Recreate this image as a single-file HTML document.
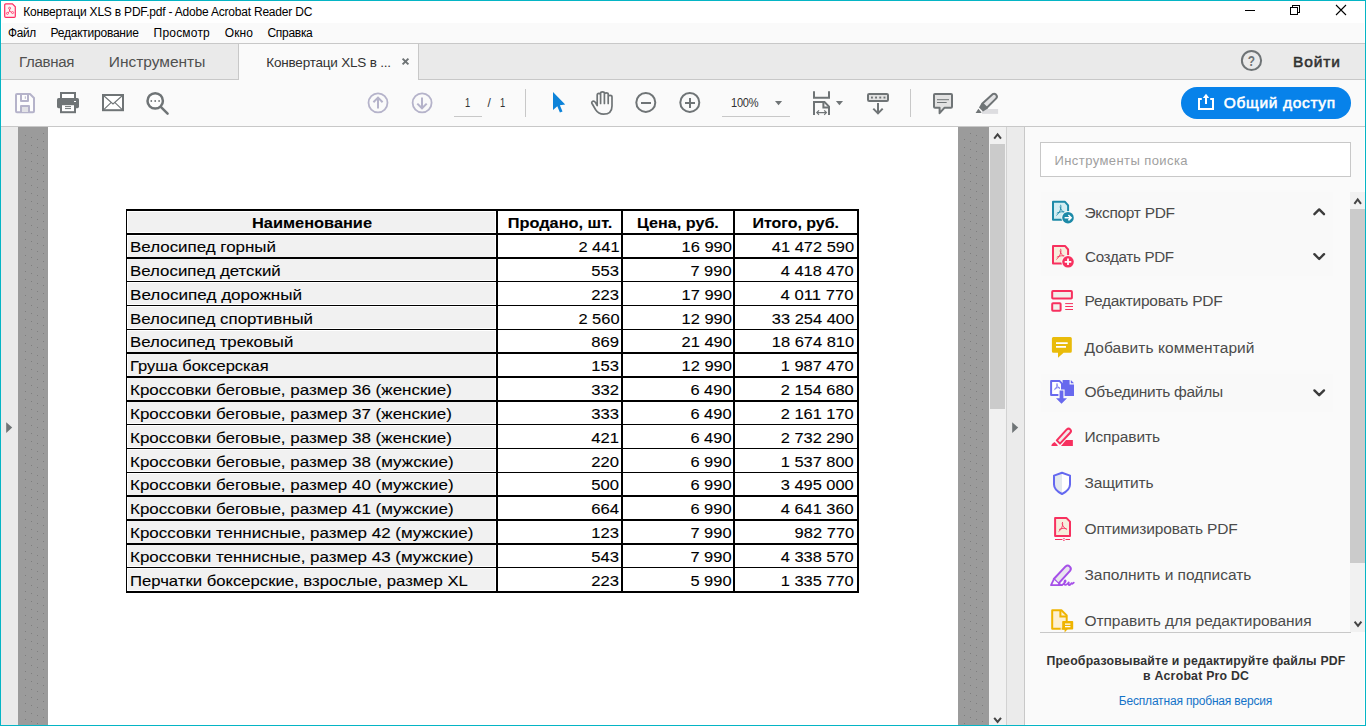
<!DOCTYPE html>
<html lang="ru"><head><meta charset="utf-8"><title>Конвертаци XLS в PDF.pdf - Adobe Acrobat Reader DC</title>
<style>
html,body{margin:0;padding:0}
body{width:1366px;height:726px;overflow:hidden;position:relative;background:#fff;font-family:"Liberation Sans",sans-serif}
div,span,svg{position:absolute;box-sizing:border-box}
.t{white-space:nowrap;line-height:normal}
.c{white-space:nowrap;line-height:normal;font-size:15px;color:#000;-webkit-text-stroke:0.1px #000}
.ln{background:#000}
.fill{background:#f1f1f1}
svg{overflow:visible}
</style></head><body>
<!-- window chrome -->
<div style="left:0;top:0;width:1366px;height:726px;border:1px solid #05b5c5;z-index:50"></div>
<div style="left:2px;top:23px;width:1362px;height:20px;background:#fafafa"></div>
<div style="left:1px;top:43px;width:1364px;height:37px;background:#eaeaea;border-top:1px solid #c8c8c8;border-bottom:1px solid #c8c8c8"></div>
<div style="left:238px;top:44px;width:181px;height:36px;background:#fafafa;border-right:1px solid #c8c8c8;border-left:1px solid #c8c8c8"></div>
<div style="left:1px;top:80px;width:1364px;height:47px;background:#fafafa;border-bottom:1px solid #c8c8c8"></div>
<!-- document area -->
<div style="left:1px;top:127px;width:17px;height:598px;background:#ebebeb"></div>
<div style="left:18px;top:127px;width:30px;height:598px;background:#9b9b9b"></div>
<div style="left:958px;top:127px;width:31px;height:598px;background:#9b9b9b"></div>
<div style="left:989px;top:127px;width:17px;height:598px;background:#f1f1f1"></div>
<div style="left:990px;top:144px;width:15px;height:265px;background:#cbcbcb"></div>
<div style="left:1006px;top:127px;width:1px;height:598px;background:#d2d2d2"></div>
<div style="left:1007px;top:127px;width:17px;height:598px;background:#ebebeb"></div>
<div style="left:1024px;top:127px;width:1px;height:598px;background:#c8c8c8"></div>
<div style="left:1025px;top:127px;width:339px;height:597px;background:#fafafa"></div>
<svg width="1366" height="726" viewBox="0 0 1366 726" style="left:0;top:0"><defs><pattern id="dz" width="24" height="8" patternUnits="userSpaceOnUse" patternTransform="translate(25 7)"><g fill="#7e7e7e"><rect x="0" y="0" width="1" height="1"/><rect x="6" y="2" width="1" height="1"/><rect x="12" y="4" width="1" height="1"/><rect x="18" y="6" width="1" height="1"/></g></pattern><pattern id="dy" width="24" height="8" patternUnits="userSpaceOnUse" patternTransform="translate(964 3)"><g fill="#7e7e7e"><rect x="0" y="0" width="1" height="1"/><rect x="6" y="2" width="1" height="1"/><rect x="12" y="4" width="1" height="1"/><rect x="18" y="6" width="1" height="1"/></g></pattern></defs><rect x="24" y="133" width="21" height="592" fill="url(#dz)"/><rect x="963" y="133" width="21" height="592" fill="url(#dy)"/></svg>
<!-- right panel -->
<div style="left:1040px;top:142px;width:311px;height:35px;background:#fff;border:1px solid #c8c8c8"></div>
<div style="left:1040px;top:632px;width:311px;height:1px;background:#c8c8c8"></div>
<div style="left:1350px;top:192px;width:15px;height:440px;background:#f1f1f1"></div>
<div style="left:1350px;top:209px;width:15px;height:354px;background:#cbcbcb"></div>
<!-- hover rows -->
<div style="left:1041px;top:192px;width:292px;height:84px;background:#f9f9f9"></div>
<div style="left:1041px;top:374px;width:292px;height:38px;background:#f9f9f9"></div>
<!-- share button -->
<div style="left:1181px;top:87px;width:170px;height:32px;border-radius:16px;background:#0782ea"></div>
<div class="fill" style="left:127px;top:211px;width:370px;height:380px"></div>
<div style="left:127px;top:208.6px;width:370px;height:3.2px;background:#fff"></div>
<div style="left:127px;top:232.4px;width:370px;height:3.2px;background:#fff"></div>
<div style="left:127px;top:256.5px;width:370px;height:2.7px;background:#fff"></div>
<div style="left:127px;top:280.3px;width:370px;height:2.7px;background:#fff"></div>
<div style="left:127px;top:304.2px;width:370px;height:2.7px;background:#fff"></div>
<div style="left:127px;top:328.0px;width:370px;height:2.7px;background:#fff"></div>
<div style="left:127px;top:351.8px;width:370px;height:2.7px;background:#fff"></div>
<div style="left:127px;top:375.7px;width:370px;height:2.7px;background:#fff"></div>
<div style="left:127px;top:399.5px;width:370px;height:2.7px;background:#fff"></div>
<div style="left:127px;top:423.3px;width:370px;height:2.7px;background:#fff"></div>
<div style="left:127px;top:447.2px;width:370px;height:2.7px;background:#fff"></div>
<div style="left:127px;top:471.0px;width:370px;height:2.7px;background:#fff"></div>
<div style="left:127px;top:494.8px;width:370px;height:2.7px;background:#fff"></div>
<div style="left:127px;top:518.7px;width:370px;height:2.7px;background:#fff"></div>
<div style="left:127px;top:542.5px;width:370px;height:2.7px;background:#fff"></div>
<div style="left:127px;top:566.3px;width:370px;height:2.7px;background:#fff"></div>
<div style="left:127px;top:589.9px;width:370px;height:3.2px;background:#fff"></div>
<div style="left:127px;top:211px;width:1.2px;height:380px;background:#fff"></div>
<div style="left:495.4px;top:211px;width:1px;height:380px;background:#fff"></div>
<div class="ln" style="left:126px;top:209.2px;width:733px;height:2px"></div>
<div class="ln" style="left:126px;top:233.0px;width:733px;height:2px"></div>
<div class="ln" style="left:126px;top:257.1px;width:733px;height:1.5px"></div>
<div class="ln" style="left:126px;top:280.9px;width:733px;height:1.5px"></div>
<div class="ln" style="left:126px;top:304.8px;width:733px;height:1.5px"></div>
<div class="ln" style="left:126px;top:328.6px;width:733px;height:1.5px"></div>
<div class="ln" style="left:126px;top:352.4px;width:733px;height:1.5px"></div>
<div class="ln" style="left:126px;top:376.3px;width:733px;height:1.5px"></div>
<div class="ln" style="left:126px;top:400.1px;width:733px;height:1.5px"></div>
<div class="ln" style="left:126px;top:423.9px;width:733px;height:1.5px"></div>
<div class="ln" style="left:126px;top:447.8px;width:733px;height:1.5px"></div>
<div class="ln" style="left:126px;top:471.6px;width:733px;height:1.5px"></div>
<div class="ln" style="left:126px;top:495.4px;width:733px;height:1.5px"></div>
<div class="ln" style="left:126px;top:519.3px;width:733px;height:1.5px"></div>
<div class="ln" style="left:126px;top:543.1px;width:733px;height:1.5px"></div>
<div class="ln" style="left:126px;top:566.9px;width:733px;height:1.5px"></div>
<div class="ln" style="left:126px;top:590.5px;width:733px;height:2px"></div>
<div class="ln" style="left:125.8px;top:209px;width:1.5px;height:383.3px"></div>
<div class="ln" style="left:496.0px;top:209px;width:2px;height:383.3px"></div>
<div class="ln" style="left:621.0px;top:209px;width:2px;height:383.3px"></div>
<div class="ln" style="left:733.2px;top:209px;width:2px;height:383.3px"></div>
<div class="ln" style="left:856.7px;top:209px;width:2px;height:383.3px"></div>
<span class="c" style="left:256.7px;transform-origin:50% 0;top:214.0px;transform:scaleX(1.0904);font-weight:700;">Наименование</span>
<span class="c" style="left:511.5px;transform-origin:50% 0;top:214.0px;transform:scaleX(1.0890);font-weight:700;">Продано, шт.</span>
<span class="c" style="left:640.1px;transform-origin:50% 0;top:214.0px;transform:scaleX(1.0757);font-weight:700;">Цена, руб.</span>
<span class="c" style="left:755.3px;transform-origin:50% 0;top:214.0px;transform:scaleX(1.0624);font-weight:700;">Итого, руб.</span>
<span class="c" style="left:130.0px;transform-origin:0 0;top:238.0px;transform:scaleX(1.1288);">Велосипед горный</span>
<span class="c" style="left:581.5px;transform-origin:100% 0;top:238.0px;transform:scaleX(1.0953);">2 441</span>
<span class="c" style="left:685.5px;transform-origin:100% 0;top:238.0px;transform:scaleX(1.0977);">16 990</span>
<span class="c" style="left:778.9px;transform-origin:100% 0;top:238.0px;transform:scaleX(1.0955);">41 472 590</span>
<span class="c" style="left:130.0px;transform-origin:0 0;top:262.0px;transform:scaleX(1.1236);">Велосипед детский</span>
<span class="c" style="left:594.0px;transform-origin:100% 0;top:262.0px;transform:scaleX(1.1086);">553</span>
<span class="c" style="left:693.9px;transform-origin:100% 0;top:262.0px;transform:scaleX(1.0953);">7 990</span>
<span class="c" style="left:787.3px;transform-origin:100% 0;top:262.0px;transform:scaleX(1.0939);">4 418 470</span>
<span class="c" style="left:130.0px;transform-origin:0 0;top:286.0px;transform:scaleX(1.1386);">Велосипед дорожный</span>
<span class="c" style="left:594.0px;transform-origin:100% 0;top:286.0px;transform:scaleX(1.1086);">223</span>
<span class="c" style="left:685.5px;transform-origin:100% 0;top:286.0px;transform:scaleX(1.0977);">17 990</span>
<span class="c" style="left:788.4px;transform-origin:100% 0;top:286.0px;transform:scaleX(1.1124);">4 011 770</span>
<span class="c" style="left:130.0px;transform-origin:0 0;top:310.0px;transform:scaleX(1.1250);">Велосипед спортивный</span>
<span class="c" style="left:581.5px;transform-origin:100% 0;top:310.0px;transform:scaleX(1.0953);">2 560</span>
<span class="c" style="left:685.5px;transform-origin:100% 0;top:310.0px;transform:scaleX(1.0977);">12 990</span>
<span class="c" style="left:778.9px;transform-origin:100% 0;top:310.0px;transform:scaleX(1.0955);">33 254 400</span>
<span class="c" style="left:130.0px;transform-origin:0 0;top:333.0px;transform:scaleX(1.1202);">Велосипед трековый</span>
<span class="c" style="left:594.0px;transform-origin:100% 0;top:333.0px;transform:scaleX(1.1086);">869</span>
<span class="c" style="left:685.5px;transform-origin:100% 0;top:333.0px;transform:scaleX(1.0977);">21 490</span>
<span class="c" style="left:778.9px;transform-origin:100% 0;top:333.0px;transform:scaleX(1.0955);">18 674 810</span>
<span class="c" style="left:130.0px;transform-origin:0 0;top:357.0px;transform:scaleX(1.0991);">Груша боксерская</span>
<span class="c" style="left:594.0px;transform-origin:100% 0;top:357.0px;transform:scaleX(1.1086);">153</span>
<span class="c" style="left:685.5px;transform-origin:100% 0;top:357.0px;transform:scaleX(1.0977);">12 990</span>
<span class="c" style="left:787.3px;transform-origin:100% 0;top:357.0px;transform:scaleX(1.0939);">1 987 470</span>
<span class="c" style="left:130.0px;transform-origin:0 0;top:381.0px;transform:scaleX(1.1314);">Кроссовки беговые, размер 36 (женские)</span>
<span class="c" style="left:594.0px;transform-origin:100% 0;top:381.0px;transform:scaleX(1.1086);">332</span>
<span class="c" style="left:693.9px;transform-origin:100% 0;top:381.0px;transform:scaleX(1.0953);">6 490</span>
<span class="c" style="left:787.3px;transform-origin:100% 0;top:381.0px;transform:scaleX(1.0939);">2 154 680</span>
<span class="c" style="left:130.0px;transform-origin:0 0;top:405.0px;transform:scaleX(1.1314);">Кроссовки беговые, размер 37 (женские)</span>
<span class="c" style="left:594.0px;transform-origin:100% 0;top:405.0px;transform:scaleX(1.1086);">333</span>
<span class="c" style="left:693.9px;transform-origin:100% 0;top:405.0px;transform:scaleX(1.0953);">6 490</span>
<span class="c" style="left:787.3px;transform-origin:100% 0;top:405.0px;transform:scaleX(1.0939);">2 161 170</span>
<span class="c" style="left:130.0px;transform-origin:0 0;top:429.0px;transform:scaleX(1.1314);">Кроссовки беговые, размер 38 (женские)</span>
<span class="c" style="left:594.0px;transform-origin:100% 0;top:429.0px;transform:scaleX(1.1086);">421</span>
<span class="c" style="left:693.9px;transform-origin:100% 0;top:429.0px;transform:scaleX(1.0953);">6 490</span>
<span class="c" style="left:787.3px;transform-origin:100% 0;top:429.0px;transform:scaleX(1.0939);">2 732 290</span>
<span class="c" style="left:130.0px;transform-origin:0 0;top:453.0px;transform:scaleX(1.1313);">Кроссовки беговые, размер 38 (мужские)</span>
<span class="c" style="left:594.0px;transform-origin:100% 0;top:453.0px;transform:scaleX(1.1086);">220</span>
<span class="c" style="left:693.9px;transform-origin:100% 0;top:453.0px;transform:scaleX(1.0953);">6 990</span>
<span class="c" style="left:787.3px;transform-origin:100% 0;top:453.0px;transform:scaleX(1.0939);">1 537 800</span>
<span class="c" style="left:130.0px;transform-origin:0 0;top:476.0px;transform:scaleX(1.1313);">Кроссовки беговые, размер 40 (мужские)</span>
<span class="c" style="left:594.0px;transform-origin:100% 0;top:476.0px;transform:scaleX(1.1086);">500</span>
<span class="c" style="left:693.9px;transform-origin:100% 0;top:476.0px;transform:scaleX(1.0953);">6 990</span>
<span class="c" style="left:787.3px;transform-origin:100% 0;top:476.0px;transform:scaleX(1.0939);">3 495 000</span>
<span class="c" style="left:130.0px;transform-origin:0 0;top:500.0px;transform:scaleX(1.1313);">Кроссовки беговые, размер 41 (мужские)</span>
<span class="c" style="left:594.0px;transform-origin:100% 0;top:500.0px;transform:scaleX(1.1086);">664</span>
<span class="c" style="left:693.9px;transform-origin:100% 0;top:500.0px;transform:scaleX(1.0953);">6 990</span>
<span class="c" style="left:787.3px;transform-origin:100% 0;top:500.0px;transform:scaleX(1.0939);">4 641 360</span>
<span class="c" style="left:130.0px;transform-origin:0 0;top:524.0px;transform:scaleX(1.1307);">Кроссовки теннисные, размер 42 (мужские)</span>
<span class="c" style="left:594.0px;transform-origin:100% 0;top:524.0px;transform:scaleX(1.1086);">123</span>
<span class="c" style="left:693.9px;transform-origin:100% 0;top:524.0px;transform:scaleX(1.0953);">7 990</span>
<span class="c" style="left:799.8px;transform-origin:100% 0;top:524.0px;transform:scaleX(1.0994);">982 770</span>
<span class="c" style="left:130.0px;transform-origin:0 0;top:548.0px;transform:scaleX(1.1307);">Кроссовки теннисные, размер 43 (мужские)</span>
<span class="c" style="left:594.0px;transform-origin:100% 0;top:548.0px;transform:scaleX(1.1086);">543</span>
<span class="c" style="left:693.9px;transform-origin:100% 0;top:548.0px;transform:scaleX(1.0953);">7 990</span>
<span class="c" style="left:787.3px;transform-origin:100% 0;top:548.0px;transform:scaleX(1.0939);">4 338 570</span>
<span class="c" style="left:130.0px;transform-origin:0 0;top:572.0px;transform:scaleX(1.1118);">Перчатки боксерские, взрослые, размер XL</span>
<span class="c" style="left:594.0px;transform-origin:100% 0;top:572.0px;transform:scaleX(1.1086);">223</span>
<span class="c" style="left:693.9px;transform-origin:100% 0;top:572.0px;transform:scaleX(1.0953);">5 990</span>
<span class="c" style="left:787.3px;transform-origin:100% 0;top:572.0px;transform:scaleX(1.0939);">1 335 770</span>
<span class="t" style="left:23.3px;top:5.0px;font-size:12px;color:#000;letter-spacing:-0.205px;">Конвертаци XLS в PDF.pdf - Adobe Acrobat Reader DC</span>
<span class="t" style="left:7.5px;top:26.0px;font-size:12px;color:#000;letter-spacing:-0.300px;transform:scaleX(0.9820);transform-origin:0 0;">Файл</span>
<span class="t" style="left:50.5px;top:26.0px;font-size:12px;color:#000;letter-spacing:-0.232px;">Редактирование</span>
<span class="t" style="left:153.6px;top:26.0px;font-size:12px;color:#000;letter-spacing:0.198px;">Просмотр</span>
<span class="t" style="left:224.7px;top:26.0px;font-size:12px;color:#000;letter-spacing:0.136px;">Окно</span>
<span class="t" style="left:267.5px;top:26.0px;font-size:12px;color:#000;letter-spacing:-0.296px;">Справка</span>
<span class="t" style="left:18.7px;top:53.0px;font-size:15.5px;color:#505050;letter-spacing:-0.300px;transform:scaleX(0.9703);transform-origin:0 0;">Главная</span>
<span class="t" style="left:108.8px;top:53.0px;font-size:15.5px;color:#505050;letter-spacing:-0.016px;">Инструменты</span>
<span class="t" style="left:266.3px;top:55.0px;font-size:13.5px;color:#323232;letter-spacing:-0.204px;">Конвертаци XLS в ...</span>
<span class="t" style="left:1293.0px;top:53.0px;font-size:15.5px;color:#323232;letter-spacing:0.906px;-webkit-text-stroke:0.55px #323232;">Войти</span>
<span class="t" style="left:465.2px;top:96.0px;font-size:12px;color:#323232;letter-spacing:-0.300px;transform:scaleX(0.7776);transform-origin:0 0;">1</span>
<span class="t" style="left:487.6px;top:96.0px;font-size:12px;color:#323232;">/</span>
<span class="t" style="left:500.3px;top:96.0px;font-size:12px;color:#323232;letter-spacing:-0.300px;transform:scaleX(0.7776);transform-origin:0 0;">1</span>
<span class="t" style="left:730.5px;top:96.0px;font-size:12px;color:#323232;letter-spacing:-0.300px;transform:scaleX(0.9227);transform-origin:0 0;">100%</span>
<span class="t" style="left:1223.8px;top:94.0px;font-size:15.5px;color:#fff;letter-spacing:0.651px;-webkit-text-stroke:0.55px #fff;">Общий доступ</span>
<span class="t" style="left:1054.5px;top:153.0px;font-size:13px;color:#a0a0a0;letter-spacing:0.423px;">Инструменты поиска</span>
<span class="t" style="left:1084.5px;top:204.0px;font-size:15.5px;color:#4b4b4b;letter-spacing:-0.300px;">Экспорт PDF</span>
<span class="t" style="left:1084.5px;top:248.0px;font-size:15.5px;color:#4b4b4b;letter-spacing:-0.300px;transform:scaleX(0.9768);transform-origin:0 0;">Создать PDF</span>
<span class="t" style="left:1084.5px;top:292.0px;font-size:15.5px;color:#4b4b4b;letter-spacing:-0.262px;">Редактировать PDF</span>
<span class="t" style="left:1084.5px;top:339.0px;font-size:15.5px;color:#4b4b4b;letter-spacing:0.086px;">Добавить комментарий</span>
<span class="t" style="left:1084.5px;top:383.0px;font-size:15.5px;color:#4b4b4b;letter-spacing:-0.294px;">Объединить файлы</span>
<span class="t" style="left:1084.5px;top:428.0px;font-size:15.5px;color:#4b4b4b;letter-spacing:-0.137px;">Исправить</span>
<span class="t" style="left:1084.5px;top:474.0px;font-size:15.5px;color:#4b4b4b;letter-spacing:-0.175px;">Защитить</span>
<span class="t" style="left:1084.5px;top:520.0px;font-size:15.5px;color:#4b4b4b;letter-spacing:-0.121px;">Оптимизировать PDF</span>
<span class="t" style="left:1084.5px;top:566.0px;font-size:15.5px;color:#4b4b4b;letter-spacing:-0.027px;">Заполнить и подписать</span>
<span class="t" style="left:1084.5px;top:612.0px;font-size:15.5px;color:#4b4b4b;letter-spacing:-0.062px;">Отправить для редактирования</span>
<span class="t" style="left:1046.4px;top:654.0px;font-size:12.3px;color:#323232;font-weight:700;letter-spacing:0.188px;">Преобразовывайте и редактируйте файлы PDF</span>
<span class="t" style="left:1143.0px;top:669.0px;font-size:12.3px;color:#323232;font-weight:700;letter-spacing:0.231px;">в Acrobat Pro DC</span>
<span class="t" style="left:1118.7px;top:694.0px;font-size:12px;color:#1473c8;letter-spacing:-0.172px;">Бесплатная пробная версия</span>
<svg width="1366" height="726" viewBox="0 0 1366 726" style="left:0;top:0" fill="none">
<!-- save -->
<g stroke="#b5b3ca" stroke-width="2" stroke-linejoin="round">
<path d="M17 94H30L34 98V111.2Q34 112.2 33 112.2H17Q16 112.2 16 111.2V95Q16 94 17 94Z" fill="#fdfdfd"/>
<path d="M21 94V101H28V94" />
<path d="M21 112V106H29V112" fill="#e2e2e6"/>
</g>
<path d="M25.3 96.3V98.8" stroke="#b5b3ca" stroke-width="1"/>
<!-- print -->
<rect x="57" y="98" width="22" height="10.2" rx="1.6" fill="#6f7476"/>
<rect x="61" y="93" width="14" height="6" fill="#fff" stroke="#6f7476" stroke-width="2"/>
<rect x="61" y="104.2" width="14" height="8" fill="#fff" stroke="#6f7476" stroke-width="2"/>
<path d="M65 106.6H71M65 108.6H71" stroke="#6f7476" stroke-width="1"/>
<rect x="74" y="101" width="2" height="1" fill="#fff"/>
<!-- mail -->
<rect x="103" y="95" width="20" height="15.2" fill="#fff" stroke="#6f7476" stroke-width="2"/>
<path d="M103.5 95.5L113 104L122.5 95.5M103.5 109.8L111 102.6M122.5 109.8L115 102.6" stroke="#6f7476" stroke-width="1.1"/>
<!-- search -->
<circle cx="155.2" cy="100.9" r="7.7" stroke="#6f7476" stroke-width="2.5" fill="#fdfdfd"/>
<path d="M160.8 106.8L167.6 113.6" stroke="#6f7476" stroke-width="2.5" stroke-linecap="round"/>
<g fill="#6f7476"><circle cx="151.3" cy="101" r="0.9"/><circle cx="155.2" cy="101" r="0.9"/><circle cx="159.1" cy="101" r="0.9"/></g>
<!-- page up / down -->
<g stroke="#b5b3ca" stroke-width="1.8">
<circle cx="378" cy="102.8" r="9.5"/>
<path d="M378 108.5V97.8M373.4 102.2L378 97.6L382.6 102.2" stroke-width="2"/>
<circle cx="422.1" cy="102.8" r="9.5"/>
<path d="M422 97.4V108M417.3 103.6L422 108.3L426.7 103.6" stroke-width="2"/>
</g>
<path d="M454 116.5H482" stroke="#c8c8c8" stroke-width="1"/>
<path d="M525.5 89V117M910.5 89V117" stroke="#c8c8c8" stroke-width="1"/>
<!-- pointer -->
<path d="M553 92.1V110L557.3 106.2L559.9 112.6L562.5 111.6L559.9 105.2L565.2 104.4Z" fill="#0d83d9"/>
<!-- hand -->
<g stroke="#6f7476" stroke-width="1.7" stroke-linecap="round" stroke-linejoin="round">
<path d="M597.2 105.5V95.2Q597.2 93.4 598.9 93.4Q600.6 93.4 600.6 95.2V103.5M600.6 95V93.2Q600.6 91.8 602.5 91.8Q604.4 91.8 604.4 93.2V103.5M604.4 95V94.2Q604.4 92.8 606.3 92.8Q608.2 92.8 608.2 94.2V103.5M608.2 97V96.6Q608.2 95.4 610.1 95.4Q612 95.4 612 97V106Q612 114.2 603.5 114.2Q598.5 114.2 595.5 109.5L592 103.5Q591.2 102 592.8 101.2Q594.2 100.6 595.4 102.4L597.2 105.5"/>
</g>
<!-- zoom out / in -->
<g stroke="#6f7476" stroke-width="2">
<circle cx="645.8" cy="102.4" r="9.5"/><path d="M641 103H651"/>
<circle cx="689.8" cy="102.4" r="9.5"/><path d="M685 103H695M690 98V108"/>
</g>
<!-- zoom field -->
<path d="M722 116.5H790" stroke="#c8c8c8" stroke-width="1"/>
<path d="M775 101.1H782.1L778.55 105.2Z" fill="#6f7476"/>
<!-- fit page -->
<g stroke="#6f7476" stroke-width="2">
<path d="M814 91.2V97.8H829V91.2"/>
<path d="M814 115V102.1H824.5L829 106.6V115"/>
<path d="M823.4 102.5V107.6H829" />
</g>
<path d="M817 112.6H826.2M819 110.4L816.8 112.6L819 114.8M824.2 110.4L826.4 112.6L824.2 114.8" stroke="#6f7476" stroke-width="1.2"/>
<path d="M835.9 101.1H843L839.45 105.2Z" fill="#6f7476"/>
<!-- keyboard/scroll -->
<rect x="868" y="93.9" width="20" height="7" rx="1.2" fill="#e2e2e2" stroke="#6f7476" stroke-width="2"/>
<g fill="#6f7476"><rect x="871" y="96.6" width="1.9" height="1.9"/><rect x="875.1" y="96.6" width="1.9" height="1.9"/><rect x="879.3" y="96.6" width="1.9" height="1.9"/><rect x="883.5" y="96.6" width="1.9" height="1.9"/></g>
<path d="M878 103V113M873.3 108.6L878 113.4L882.7 108.6" stroke="#6f7476" stroke-width="2"/>
<!-- comment -->
<path d="M935 93.9H951Q952 93.9 952 94.9V106.7Q952 107.7 951 107.7H944.6L939.6 113.2V107.7H935Q934 107.7 934 106.7V94.9Q934 93.9 935 93.9Z" fill="#e2e2e2" stroke="#6f7476" stroke-width="2" stroke-linejoin="round"/>
<path d="M937 99.7H949M937 102.5H946.7" stroke="#6f7476" stroke-width="1"/>
<!-- highlighter -->
<rect x="982" y="109" width="16.1" height="4.9" fill="#dddde0"/>
<path d="M982.4 103.4L992.6 94.2Q994.4 93.2 996 94.6Q997.8 96.4 996.2 98.4L986.8 107.8Z" fill="#e2e2e4" stroke="#6f7476" stroke-width="2" stroke-linejoin="round"/>
<path d="M981.6 103L987.8 108.4L983 111.4L979 107.4Z" fill="#6f7476"/>
<path d="M978.4 108.8L981.6 112.4L980.6 113H975.6Z" fill="#6f7476"/>
</svg>
<svg width="1366" height="726" viewBox="0 0 1366 726" style="left:0;top:0" fill="none">
<!-- export pdf -->
<g stroke="#1d8aa8" stroke-width="2" stroke-linejoin="round">
<path d="M1053 201.8H1065L1068.1 205.4V219.8H1053Z" fill="#d3eef3"/>
<path d="M1060.6 204.8C1061.8 208 1059.5 213.2 1056.4 215.4M1056.8 213.2C1059.8 211.6 1063 211.2 1065.4 212.6M1060 206.6C1060.6 209.4 1062.6 211.8 1065 213" stroke-width="0.9"/>
</g>
<circle cx="1068" cy="217.7" r="6.7" fill="#fafafa"/>
<circle cx="1068" cy="217.7" r="5.8" fill="#1d8aa8"/>
<path d="M1064.6 217.7H1070.6M1068.4 215L1071.1 217.7L1068.4 220.4" stroke="#fff" stroke-width="1.6"/>
<!-- create pdf -->
<g stroke="#f7305f" stroke-width="2" stroke-linejoin="round">
<path d="M1053 245.9H1065L1068.1 249.5V263.5H1053Z" fill="#f6eedd"/>
<path d="M1060.6 248.8C1061.8 252 1059.5 257.2 1056.4 259.4M1056.8 257.2C1059.8 255.6 1063 255.2 1065.4 256.6M1060 250.6C1060.6 253.4 1062.6 255.8 1065 257" stroke-width="0.9"/>
</g>
<circle cx="1068" cy="261.8" r="6.7" fill="#fafafa"/>
<circle cx="1068" cy="261.8" r="5.8" fill="#f7305f"/>
<path d="M1064.7 261.8H1071.3M1068 258.5V265.1" stroke="#fff" stroke-width="1.8"/>
<!-- edit pdf -->
<g stroke="#f7305f" stroke-width="2">
<rect x="1052.2" y="291.1" width="19.7" height="7.5" rx="0.8" fill="#f2f0ec"/>
<rect x="1052.2" y="303.3" width="8.4" height="7.4" rx="0.8" fill="#f2f0ec"/>
</g>
<path d="M1065.2 303.6H1073M1065.2 306.5H1073M1065.2 309.5H1073" stroke="#f7305f" stroke-width="1"/>
<!-- add comment -->
<path d="M1053.4 337H1070.3Q1071.8 337 1071.8 338.5V351.2Q1071.8 352.7 1070.3 352.7H1063.6L1058 357.8V352.7H1053.4Q1051.9 352.7 1051.9 351.2V338.5Q1051.9 337 1053.4 337Z" fill="#e9bb0a"/>
<path d="M1056 343.1H1067.7M1056 346.9H1066" stroke="#fff" stroke-width="1.8"/>
<!-- combine files -->
<path d="M1051.1 380.9H1059.4L1062 383.6V394.9H1051.1Z" fill="#fff" stroke="#6869ee" stroke-width="2" stroke-linejoin="round"/>
<path d="M1057 383.2C1057.6 385.4 1056.4 388.6 1054.2 390.2M1054.6 388.6C1056.4 387.6 1058.4 387.4 1060 388.2M1056.8 384.4C1057.2 386.2 1058.4 387.6 1060 388.4" stroke="#6869ee" stroke-width="0.8"/>
<path d="M1062.6 379.9H1069.6V384.4H1074V395.9H1062.6Z" fill="#6869ee"/>
<path d="M1070.8 379.9L1074 383.2H1070.8Z" fill="#6869ee"/>
<path d="M1058.4 389.6H1064.6V397.4H1068.6L1061.5 404.6L1054.4 397.4H1058.4Z" fill="#fafafa"/>
<path d="M1059.6 390.6H1063.4V398.2H1067L1061.5 403.8L1056 398.2H1059.6Z" fill="#6869ee"/>
<!-- redact / fix -->
<path d="M1056.8 440.4L1066.8 429.4Q1068.6 427.8 1070.2 429.4Q1071.8 431 1070.2 432.8L1060 443.6Z" fill="#f3e8e8" stroke="#f7305f" stroke-width="2" stroke-linejoin="round"/>
<path d="M1054.6 442L1058 445.4Q1057 446 1055.8 446H1051.4Q1051.2 444.2 1054.6 442Z" fill="#f7305f"/>
<path d="M1066 440H1072.9V446H1061Z" fill="#f7305f"/>
<!-- protect -->
<path d="M1062 472.8L1070 475.6V484.5Q1070 490 1062 494L1062 472.8Z" fill="#fff"/>
<path d="M1062 472.8L1054 475.6V484.5Q1054 490 1062 494Z" fill="#e3e8ee"/>
<path d="M1062 472.8L1070 475.6V484.5Q1070 490 1062 494Q1054 490 1054 484.5V475.6Z" stroke="#6468f0" stroke-width="2" stroke-linejoin="round"/>
<!-- optimize -->
<g stroke="#f7305f" stroke-width="2" stroke-linejoin="round">
<path d="M1055.1 518.1H1066.6L1070 521.6V535.9H1055.1Z" fill="#f6eedd"/>
<path d="M1062.4 522C1063.4 525 1061.4 529.6 1058.6 531.6M1059 529.6C1061.6 528.2 1064.6 527.8 1066.8 529M1062 523.4C1062.6 526 1064.4 528.2 1066.6 529.4" stroke-width="0.9"/>
</g>
<path d="M1055 539.5H1062M1066 539.5H1070" stroke="#f7305f" stroke-width="1"/>
<path d="M1064 538.2L1065.3 539.5L1064 540.8L1062.7 539.5Z" stroke="#f7305f" stroke-width="0.8"/>
<!-- fill & sign -->
<path d="M1053.8 579L1065.6 566.4Q1067.8 564.6 1069.8 566.6Q1071.8 568.6 1070 570.8L1058.4 583.6Z" fill="#e9e4ee" stroke="#a54fe8" stroke-width="2" stroke-linejoin="round"/>
<path d="M1053.8 579.4L1051 585.2H1061.8L1058.2 583.4" stroke="#a54fe8" stroke-width="1.8" stroke-linejoin="round" fill="#fafafa"/>
<path d="M1062 585C1064 584 1066.4 581.2 1065.4 580.4C1064.4 579.8 1063.6 584.6 1065.4 585C1067 585.2 1068.6 582 1068.8 582.4C1069 583 1068 585 1069.4 585.2C1070.8 585.2 1071.2 582.8 1071.6 583C1072 583.4 1071.4 585 1073.8 582.6" stroke="#a54fe8" stroke-width="1.7" stroke-linecap="round"/>
<!-- send for review -->
<path d="M1052.2 610.2H1061.4L1066.7 615.4V628.8H1052.2Z" fill="#fdf0d2" stroke="#efb400" stroke-width="2" stroke-linejoin="round"/>
<path d="M1060.4 610.6V616.4H1066.4" stroke="#efb400" stroke-width="2"/>
<path d="M1063 621H1072.4Q1073.2 621 1073.2 621.8V628.8Q1073.2 629.6 1072.4 629.6H1067.4L1064.6 632.4V629.6H1063Q1062.2 629.6 1062.2 628.8V621.8Q1062.2 621 1063 621Z" fill="#efb400"/>
<path d="M1061.2 620.4V630.4" stroke="#fdf0d2" stroke-width="1"/>
<path d="M1065 624.1H1070.4M1065 626.7H1070.4" stroke="#fff" stroke-width="1.2"/>
<!-- chevrons -->
<g stroke="#3c3c3c" stroke-width="2.4" stroke-linecap="round" stroke-linejoin="round">
<path d="M1314.4 214.2L1319.2 209.4L1324 214.2"/>
<path d="M1314.4 254.2L1319.2 259L1324 254.2"/>
<path d="M1314.4 390.4L1319.2 395.2L1324 390.4"/>
</g>
</svg>
<svg width="1366" height="726" viewBox="0 0 1366 726" style="left:0;top:0" fill="none">
<!-- title icon -->
<path d="M5.8 3.9H12.4L15.3 6.8V16.2Q15.3 17.3 14.2 17.3H5.8Q4.7 17.3 4.7 16.2V5Q4.7 3.9 5.8 3.9Z" fill="#fdf3f3" stroke="#ff2d63" stroke-width="1.2"/>
<path d="M9.6 8.4V11.3L7.6 13.2M9.6 11.3L12.4 12.6" stroke="#ff2d63" stroke-width="0.9"/>
<g stroke="#ff2d63" stroke-width="0.8" fill="#fff"><circle cx="9.6" cy="8.2" r="1"/><circle cx="7.4" cy="13.4" r="1"/><circle cx="12.6" cy="12.6" r="1"/></g>
<!-- window controls -->
<g stroke="#000" stroke-width="1" shape-rendering="crispEdges">
<path d="M1245 10.5H1255"/>
<rect x="1290.5" y="7.5" width="7" height="7"/>
<path d="M1292.5 7.5V5.5H1299.5V12.5H1297.5"/>
</g>
<path d="M1336 5L1346 15M1346 5L1336 15" stroke="#000" stroke-width="1.1"/>
<!-- tab close -->
<path d="M402.6 58.6L408.4 64.4M408.4 58.6L402.6 64.4" stroke="#6f7476" stroke-width="2"/>
<!-- help -->
<circle cx="1251.5" cy="60.5" r="9.6" stroke="#6f7476" stroke-width="2"/>
<text x="1251.5" y="65.6" font-family="Liberation Sans, sans-serif" font-size="14" font-weight="700" fill="#6f7476" text-anchor="middle" transform="translate(1251.5 0) scale(0.85 1) translate(-1251.5 0)">?</text>
<!-- share icon -->
<path d="M1201.8 99H1199V109H1213V99H1210.2" stroke="#fff" stroke-width="2"/>
<path d="M1206 103.9V97" stroke="#fff" stroke-width="2"/>
<path d="M1206 93.8L1209.2 98H1202.8Z" fill="#fff"/>
<!-- side triangles -->
<path d="M6.2 422.2L12.2 427.6L6.2 433Z" fill="#6f7476"/>
<path d="M1012.2 422.2L1018.2 427.6L1012.2 433Z" fill="#6f7476"/>
<!-- scrollbar arrows -->
<g stroke="#444" stroke-width="2" stroke-linejoin="miter">
<path d="M994.2 138.6L997.6 134.4L1001 138.6"/>
<path d="M994.2 717.8L997.6 722L1001 717.8"/>
<path d="M1354.4 203.8L1357.7 199.4L1361 203.8"/>
<path d="M1354.6 621.6L1358 625.8L1361.4 621.6"/>
</g>
</svg>

</body></html>
